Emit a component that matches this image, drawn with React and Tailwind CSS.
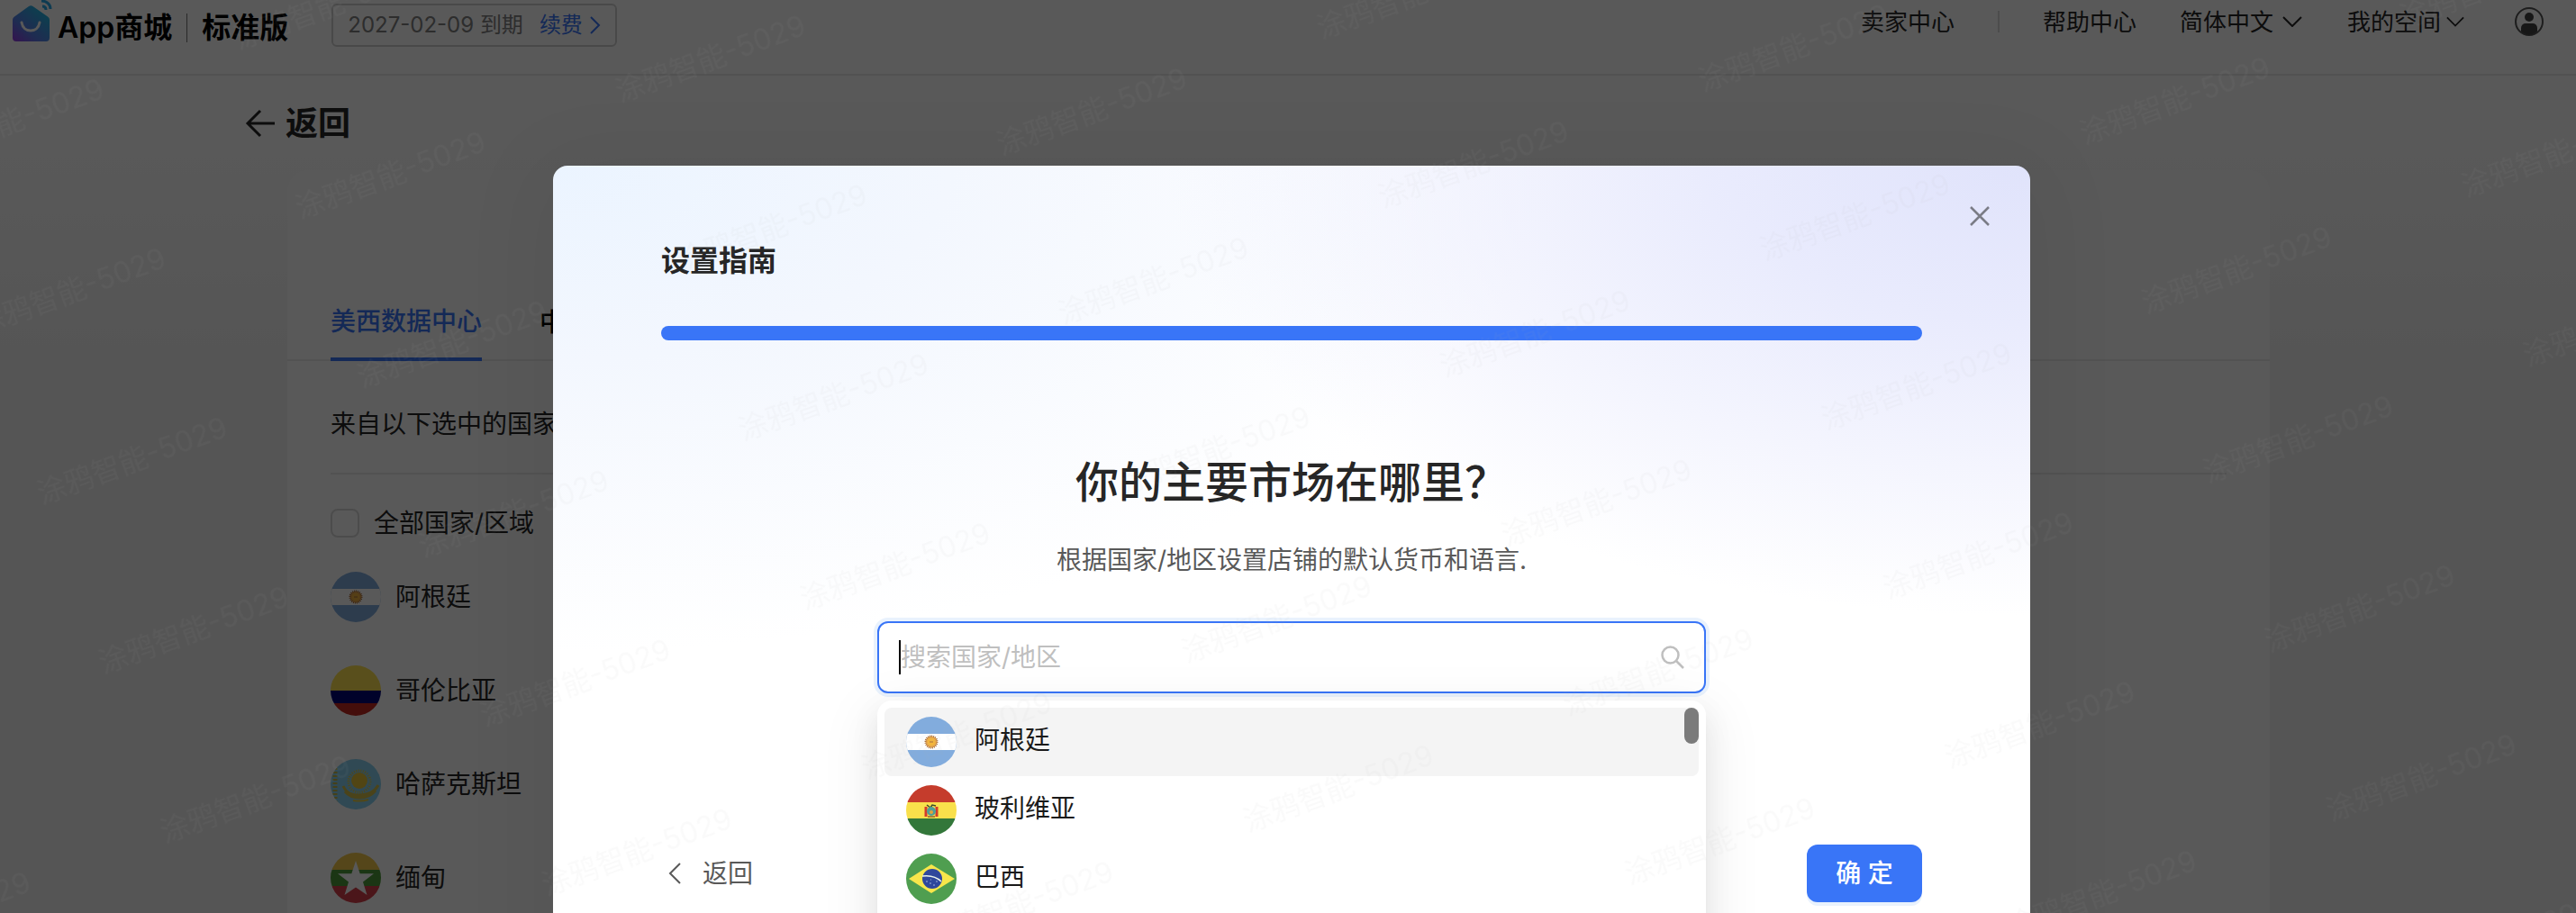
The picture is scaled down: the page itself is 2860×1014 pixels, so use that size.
import React, { useState } from 'react';

const FONT = "font-['Inter','Noto_Sans_CJK_SC',sans-serif]";

const Watermark = () => (
  <svg className="pointer-events-none absolute inset-0 h-full w-full" aria-hidden="true">
    <defs>
      <pattern id="watermark" x="230" y="30" width="378" height="200" patternUnits="userSpaceOnUse" patternTransform="rotate(-20)">
        <text x="0" y="112" fontSize="32" fill="#a0a0a0" fillOpacity="0.06">涂鸦智能-5029</text>
      </pattern>
    </defs>
    <rect width="100%" height="100%" fill="url(#watermark)" />
  </svg>
);

const Logo = () => (
  <svg className="h-12 w-12 shrink-0" viewBox="0 0 48 48" fill="none">
    <defs>
      <linearGradient id="logo" x1="4" y1="46" x2="36" y2="8" gradientUnits="userSpaceOnUse">
        <stop stopColor="#a02be0" />
        <stop offset="0.45" stopColor="#5a7ce8" />
        <stop offset="1" stopColor="#25b4e0" />
      </linearGradient>
    </defs>
    <path d="M4 18a4 4 0 0 1 2-3.500L22 3a4 4 0 0 1 4.500 0L43 14.500a4 4 0 0 1 2 3.500V38a4 4 0 0 1-4 4H8a4 4 0 0 1-4-4z" fill="url(#logo)" />
    <path d="M14 21c2 12 18 12 20 0" stroke="#fff" strokeWidth="3" strokeLinecap="round" />
  </svg>
);

const SignalWaves = () => (
  <svg className="absolute top-0 right-0 h-3 w-3" viewBox="0 0 12 12" fill="none" stroke="#2aa8e8" strokeWidth="3" aria-hidden="true">
    <path d="M1 7c2 0 4 1 4 4M0 1c6 0 10 4 10 9" />
  </svg>
);

const Chevron = ({ className, d = 'M1 1l10 10L21 1', box = '0 0 22 12' }) => (
  <svg className={className} viewBox={box} fill="none" stroke="currentColor" strokeWidth="2" aria-hidden="true">
    <path d={d} />
  </svg>
);

const FLAGS = {
  ar: (
    <>
      <path fill="#82acdd" d="M0 0h56v56H0z" />
      <path fill="#fff" d="M0 19h56v18H0z" />
      <circle cx="28" cy="28" r="6.500" fill="#eaa94a" stroke="#a96f3c" strokeWidth="2" strokeDasharray="1 1" />
      <circle cx="28" cy="28" r="4" fill="#f3b63c" />
      <path d="M26 28h4" stroke="#a96f3c" strokeWidth="1" />
    </>
  ),
  co: (
    <>
      <path fill="#ffe250" d="M0 0h56v28H0z" />
      <path fill="#00067a" d="M0 28h56v14H0z" />
      <path fill="#c32a20" d="M0 42h56v14H0z" />
    </>
  ),
  kz: (
    <>
      <path fill="#8ad2f0" d="M0 0h56v56H0z" />
      <path d="M5 10v38" stroke="#c5b84a" strokeWidth="5" strokeDasharray="2 2" />
      <circle cx="32" cy="25" r="12" fill="none" stroke="#e8cc40" strokeWidth="3" strokeDasharray="1 1.500" />
      <circle cx="32" cy="24" r="9" fill="#e8c63a" />
      <path d="M14 30c4 9 11 10 18 10s16-2 21-11M16 36c5 6 10 7 16 7s13-2 18-8" stroke="#d5c04a" strokeWidth="3" fill="none" />
      <path d="M25 46c6 1 11 1 17-1" stroke="#e8cc40" strokeWidth="2" fill="none" />
    </>
  ),
  mm: (
    <>
      <path fill="#f3c84a" d="M0 0h56v19H0z" />
      <path fill="#4f9a3a" d="M0 19h56v18H0z" />
      <path fill="#d8404a" d="M0 37h56v19H0z" />
      <path fill="#fff" d="M28 9l4.700 14.200H48L36 32.500l4.500 14.500L28 38.500 15.500 47 20 32.500 8 23.200h15.300z" />
    </>
  ),
  bo: (
    <>
      <path fill="#c53c2c" d="M0 0h56v19H0z" />
      <path fill="#f9e04b" d="M0 19h56v18H0z" />
      <path fill="#33773a" d="M0 37h56v19H0z" />
      <path d="M22 24v11M34 24v11" stroke="#d23b2c" strokeWidth="3" />
      <path d="M23 22l4 3 2-3 4 1" stroke="#3c4a2c" strokeWidth="1.500" fill="none" />
      <circle cx="28" cy="29" r="5" fill="#4f9f96" />
      <circle cx="28" cy="30" r="2" fill="#e3a43a" />
      <path d="M24 35h8" stroke="#a9823a" strokeWidth="2" />
    </>
  ),
  br: (
    <>
      <path fill="#4f9e50" d="M0 0h56v56H0z" />
      <path fill="#f7e64b" d="M28 12l26 16-26 16L3 28z" />
      <circle cx="29" cy="28" r="11" fill="#2f479c" />
      <path d="M18 25c8-1 16 1 21 6" stroke="#e9f2ea" strokeWidth="1.500" fill="none" />
      <path d="M22 31h2M26 33h2M30 35h2M33 31h2M27 29h1" stroke="#9fb0dd" strokeWidth="1" />
    </>
  ),
};

const Flag = ({ code }) => (
  <svg className="h-14 w-14 shrink-0 rounded-full" viewBox="0 0 56 56" aria-hidden="true">
    {FLAGS[code]}
  </svg>
);

const shopCountries = [
  { code: 'ar', name: '阿根廷' },
  { code: 'co', name: '哥伦比亚' },
  { code: 'kz', name: '哈萨克斯坦' },
  { code: 'mm', name: '缅甸' },
];

const marketOptions = [
  { code: 'ar', name: '阿根廷' },
  { code: 'bo', name: '玻利维亚' },
  { code: 'br', name: '巴西' },
];

const Header = () => (
  <header className="flex h-[84px] items-start justify-between border-b-2 border-[#ececec] bg-white pr-9 pl-2.5">
    <div className="flex items-start">
      <div className="flex h-[62px] items-center text-[32px] leading-10 font-semibold text-black">
        <span className="relative flex h-full items-start pt-1">
          <Logo />
          <SignalWaves />
        </span>
        <span className="ml-1.5">App商城</span>
        <span className="mx-4 h-8 w-px bg-[#777]" />
        <span>标准版</span>
      </div>
      <div className="mt-1 ml-12 flex h-12 items-center rounded-md border-2 border-[#d0d0d0] px-4 text-2xl text-[#808080]">
        2027-02-09 到期
        <a href="#renew" className="ml-[18px] flex items-center gap-2 text-[#3975f7]">
          续费
          <Chevron className="h-5 w-3" box="0 0 12 20" d="M1 1l9 9-9 9" />
        </a>
      </div>
    </div>
    <nav className="flex h-12 items-center text-[26px] text-[#262626]">
      <a href="#seller">卖家中心</a>
      <span className="mx-12 h-6 w-0.5 bg-[#d9d9d9]" />
      <a href="#help">帮助中心</a>
      <button type="button" className="ml-12 flex items-center gap-2.5">
        简体中文
        <Chevron className="h-3 w-[22px]" />
      </button>
      <button type="button" className="ml-[50px] flex items-center gap-1.5">
        我的空间
        <Chevron className="h-3 w-5" />
      </button>
      <button type="button" aria-label="账号" className="ml-14">
        <svg className="h-8 w-8" viewBox="0 0 32 32" fill="none">
          <circle cx="16" cy="16" r="15" stroke="#555" strokeWidth="2" />
          <circle cx="16" cy="11" r="5" fill="#444" />
          <path d="M7 27v-4a5 5 0 0 1 5-5h8a5 5 0 0 1 5 5v4c-5 5-13 5-18 0z" fill="#444" />
        </svg>
      </button>
    </nav>
  </header>
);

const ShopPage = () => (
  <main className="pr-[340px] pl-[271px]">
    <a href="#back" className="flex h-[105px] items-center gap-3 text-[36px] font-semibold text-[#262626]">
      <svg className="h-8 w-[34px]" viewBox="0 0 34 32" fill="none" stroke="currentColor" strokeWidth="3" aria-hidden="true">
        <path d="M18 2L4 16l14 14M4 16h30" />
      </svg>
      返回
    </a>
    <section className="ml-12 rounded-t-3xl bg-white pt-32 pb-12 text-[28px] leading-10">
      <div className="flex gap-16 border-b-2 border-[#ececec] px-12 font-medium">
        <button type="button" className="-mb-0.5 border-b-4 border-[#3975f7] py-5 text-[#3975f7]">美西数据中心</button>
        <button type="button" className="py-5 text-black">中欧数据中心</button>
      </div>
      <div className="px-12">
        <p className="border-b-2 border-[#ececec] pt-[50px] pb-[34px] text-[#262626]">来自以下选中的国家/区域的用户可以访问您的店铺</p>
        <label className="flex items-center gap-4 pt-[34px] text-[#262626]">
          <input type="checkbox" className="h-8 w-8 appearance-none rounded-lg border-2 border-[#d9d9d9]" />
          全部国家/区域
        </label>
        <ul className="flex flex-col gap-12 pt-[34px]">
          {shopCountries.map((c) => (
            <li key={c.code} className="flex items-center gap-4 text-[#262626]">
              <Flag code={c.code} />
              {c.name}
            </li>
          ))}
        </ul>
      </div>
    </section>
  </main>
);

const GuideModal = () => {
  const [query, setQuery] = useState('');

  return (
    <div
      role="dialog"
      aria-labelledby="guide-title"
      className="relative min-h-[1000px] w-[1640px] rounded-2xl bg-white bg-[radial-gradient(ellipse_960px_500px_at_100%_0%,#e0e3fb_0%,#e9ebfd_35%,#ffffff00_100%),radial-gradient(ellipse_1100px_540px_at_0%_0%,#ebf4ff_0%,#f3f7fe_40%,#ffffff00_100%)] px-[120px] pt-[86px] shadow-[0_12px_96px_16px_rgba(0,0,0,0.05)]"
    >
      <button type="button" aria-label="关闭" className="absolute top-11 right-11 text-[#7a7c86]">
        <svg className="h-6 w-6" viewBox="0 0 24 24" fill="none" stroke="currentColor" strokeWidth="2.500">
          <path d="M2 2l20 20M22 2L2 22" />
        </svg>
      </button>
      <h2 id="guide-title" className="text-[32px] leading-10 font-semibold text-[#262626]">设置指南</h2>
      <div className="mt-[52px] h-4 rounded-full bg-[#3975f7]" />

      <div className="mx-auto mt-32 flex w-[920px] flex-col">
        <h3 className="text-center text-[48px] leading-[60px] font-medium text-[#262626]">你的主要市场在哪里？</h3>
        <p className="mt-9 text-center text-[28px] leading-10 text-[#595959]">根据国家/地区设置店铺的默认货币和语言.</p>
        <div className="relative mt-12">
          <div className="flex h-20 items-center rounded-xl border-2 border-[#3975f7] bg-white px-[22px] ring-4 ring-[#e9f2fd]">
            {/* text cursor */}
            <span className="h-[38px] w-0.5 bg-black" />
            <input
              type="text"
              aria-label="搜索国家/地区"
              placeholder="搜索国家/地区"
              value={query}
              onChange={(e) => setQuery(e.target.value)}
              className="grow bg-transparent text-[28px] outline-none placeholder:text-[#bfbfbf]"
            />
            <svg className="h-[26px] w-[26px] text-[#bfbfbf]" viewBox="0 0 26 26" fill="none" stroke="currentColor" strokeWidth="2.500" aria-hidden="true">
              <circle cx="10.500" cy="10.500" r="9" />
              <path d="M17 17l8 8" />
            </svg>
          </div>
          <div className="absolute inset-x-0 top-[88px] rounded-2xl bg-white p-2 shadow-[0_12px_32px_rgba(0,0,0,0.08),0_6px_12px_-8px_rgba(0,0,0,0.12),0_18px_56px_16px_rgba(0,0,0,0.05)]">
            <ul role="listbox" className="h-[500px] text-[28px] text-[#1a1a1a]">
              {marketOptions.map((c, i) => (
                <li
                  key={c.code}
                  role="option"
                  aria-selected={i === 0}
                  className={`flex h-[76px] items-center gap-5 rounded-lg px-6 ${i === 0 ? 'bg-[#f4f4f4]' : ''}`}
                >
                  <Flag code={c.code} />
                  <span className="pb-1">{c.name}</span>
                </li>
              ))}
            </ul>
            <div className="absolute top-2 right-2 h-10 w-4 rounded-full bg-[#7b7b7b]" />
          </div>
        </div>
      </div>

      <div className="mt-[168px] flex items-center justify-between text-[28px]">
        <button type="button" className="flex items-center gap-6 pl-2 text-[#595959]">
          <Chevron className="h-6 w-3.5" box="0 0 14 24" d="M13 1L2 12l11 11" />
          返回
        </button>
        <button type="button" className="h-16 w-32 rounded-xl bg-[#3975f7] font-medium text-white shadow-[0_4px_0_#e9f2fd]">
          确 定
        </button>
      </div>
    </div>
  );
};

const App = () => {
  return (
    <div className={`relative h-screen overflow-hidden bg-linear-to-b from-white from-15% to-[#f3f3f3] to-40% ${FONT}`}>
      <Header />
      <ShopPage />
      <div className="absolute inset-0 flex justify-center bg-black/65 pt-[184px] pl-2">
        <GuideModal />
      </div>
      <Watermark />
    </div>
  );
};

export default App;
